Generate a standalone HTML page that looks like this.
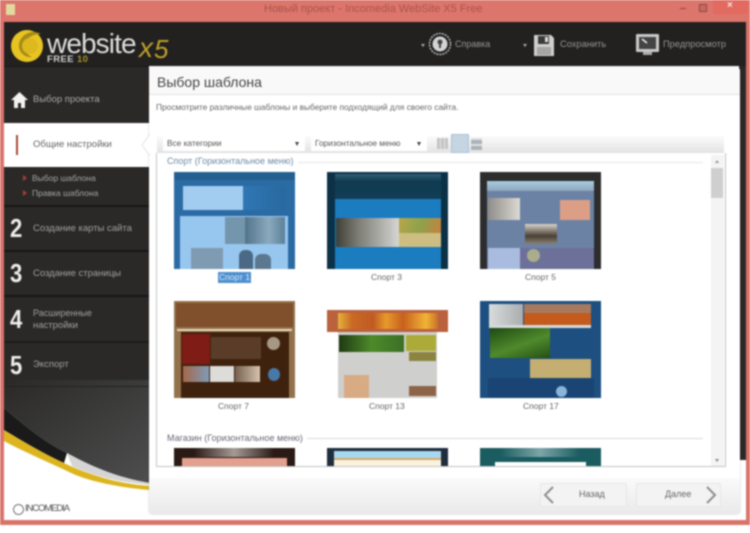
<!DOCTYPE html>
<html><head><meta charset="utf-8">
<style>
html,body{margin:0;padding:0;background:#fff;}
#r{position:relative;width:750px;height:533px;overflow:hidden;background:#fff;font-family:"Liberation Sans",sans-serif;filter:blur(.7px);}
#r div{position:absolute;}
.t{white-space:nowrap;line-height:1;}
.th{overflow:hidden;}
</style></head><body><div id="r">
<!-- frame -->
<div style="left:0;top:0;width:750px;height:525px;background:#d9736a"></div>
<div style="left:0;top:0;width:750px;height:22px;background:#dc756b"></div>
<div style="left:6px;top:4px;width:9px;height:11px;background:#e3d9a0"></div>
<div class="t" style="left:264px;top:4px;font-size:11px;color:#a8554c">Новый проект - Incomedia WebSite X5 Free</div>
<div style="left:680px;top:8px;width:6px;height:1px;background:#8a4a44"></div>
<div style="left:699px;top:4px;width:6px;height:6px;border:1px solid #8a4a44;background:#c9685f"></div>
<div style="left:713px;top:0;width:35px;height:14px;background:#e26a60;border-radius:0 0 2px 2px"></div>
<div class="t" style="left:727px;top:1px;font-size:10px;color:#f6e6e2;font-weight:bold">×</div>

<!-- app -->
<div style="left:4px;top:22px;width:742px;height:498px;background:#fff"></div>
<div style="left:4px;top:22px;width:742px;height:44px;background:#222120"></div>
<div style="left:739px;top:66px;width:7px;height:394px;background:#2a2827"></div>
<!-- sidebar -->
<div style="left:4px;top:66px;width:145px;height:322px;background:#2a2928"></div>
<svg style="position:absolute;left:4px;top:380px" width="146" height="115" viewBox="0 0 146 115">
<defs><linearGradient id="g" x1="0" y1="0" x2="1" y2="1"><stop offset="0" stop-color="#2a2928"/><stop offset="1" stop-color="#4e4e4e"/></linearGradient></defs>
<path d="M0 0H146V103C110 97 85 85 63 73C40 62 20 45 0 28Z" fill="url(#g)"/>
<path d="M0 28C20 45 40 62 63 73L60 83C40 74 20 62 0 50Z" fill="#1b1a1a"/>
<path d="M63 73C85 85 110 97 146 103V105C110 102 85 94 68 86Z" fill="#d5d5d5"/>
<path d="M0 50C20 62 40 74 60 83C85 95 115 104 146 106V110C110 107 80 100 63 91C40 80 20 72 0 61Z" fill="#dcb51e"/>
</svg>
<div style="left:4px;top:66px;width:145px;height:1px;background:#1a1918"></div>
<div style="left:4px;top:123px;width:145px;height:44px;background:#fff"></div>
<div style="left:16px;top:135px;width:2px;height:20px;background:#a8483a"></div>
<div style="left:4px;top:205px;width:145px;height:2px;background:#181716"></div>
<div style="left:4px;top:250px;width:145px;height:2px;background:#181716"></div>
<div style="left:4px;top:295px;width:145px;height:2px;background:#181716"></div>
<div style="left:4px;top:341px;width:145px;height:2px;background:#1e1d1c"></div>
<div style="left:4px;top:386px;width:145px;height:1px;background:#232221"></div>

<!-- logo -->
<svg style="position:absolute;left:8px;top:27px" width="38" height="38" viewBox="0 0 38 38"><circle cx="19" cy="19" r="16" fill="#e8c422"/><path d="M33 7C24 2 13 7 11 17C10 25 17 31 24 30C17 27 15 20 18 14C21 9 27 7 33 7Z" fill="#a78a18"/><circle cx="22" cy="19" r="8" fill="#dcb91f"/></svg>
<div class="t" style="left:47px;top:30px;font-size:28px;color:#dcdcdc;letter-spacing:-.9px">website</div>
<div class="t" style="left:139px;top:34px;font-size:28px;color:#bd9f2a;font-style:italic">x</div>
<div class="t" style="left:154px;top:36px;font-size:26px;color:#bd9f2a;font-style:italic">5</div>
<div class="t" style="left:47px;top:55px;font-size:9.5px;font-weight:bold;color:#d0d0d0;letter-spacing:.4px">FREE <span style="color:#a8922c">10</span></div>

<!-- sidebar items -->
<svg style="position:absolute;left:11px;top:91px" width="17" height="18" viewBox="0 0 17 18"><path d="M8.5 1L0 9H3V17H7V12H10V17H14V9H17Z" fill="#f2f2f2"/></svg>
<div class="t" style="left:33px;top:95px;font-size:9.5px;color:#a8a8a8">Выбор проекта</div>
<div class="t" style="left:33px;top:140px;font-size:9.5px;color:#666">Общие настройки</div>
<div style="left:23px;top:175px;width:0;height:0;border-left:4px solid #a8402e;border-top:3px solid transparent;border-bottom:3px solid transparent"></div>
<div style="left:23px;top:190px;width:0;height:0;border-left:4px solid #a8402e;border-top:3px solid transparent;border-bottom:3px solid transparent"></div>
<div class="t" style="left:32px;top:174px;font-size:8.5px;color:#a5a5a5">Выбор шаблона</div>
<div class="t" style="left:32px;top:189px;font-size:8.5px;color:#a5a5a5">Правка шаблона</div>
<div class="t" style="left:10px;top:215px;font-size:26px;font-weight:bold;color:#ececec;transform:scaleX(.85);transform-origin:left">2</div>
<div class="t" style="left:33px;top:224px;font-size:9.5px;color:#a0a0a0">Создание карты сайта</div>
<div class="t" style="left:10px;top:260px;font-size:26px;font-weight:bold;color:#ececec;transform:scaleX(.85);transform-origin:left">3</div>
<div class="t" style="left:33px;top:269px;font-size:9.5px;color:#a0a0a0">Создание страницы</div>
<div class="t" style="left:10px;top:306px;font-size:26px;font-weight:bold;color:#ececec;transform:scaleX(.85);transform-origin:left">4</div>
<div class="t" style="left:33px;top:309px;font-size:9px;color:#a0a0a0">Расширенные</div>
<div class="t" style="left:33px;top:321px;font-size:9.5px;color:#a0a0a0">настройки</div>
<div class="t" style="left:10px;top:352px;font-size:26px;font-weight:bold;color:#ececec;transform:scaleX(.85);transform-origin:left">5</div>
<div class="t" style="left:33px;top:360px;font-size:9.5px;color:#a0a0a0">Экспорт</div>
<div style="left:13px;top:504px;width:9px;height:9px;border:1px solid #777;border-radius:50%"></div>
<div class="t" style="left:25px;top:504px;font-size:9.5px;color:#555;letter-spacing:-1.1px">INCOMEDIA</div>

<!-- toolbar -->
<div style="left:421px;top:44px;width:0;height:0;border-left:2px solid transparent;border-right:2px solid transparent;border-top:3px solid #aaa"></div>
<svg style="position:absolute;left:428px;top:31px" width="24" height="26" viewBox="0 0 24 26"><circle cx="12" cy="13" r="10.5" fill="#222" stroke="#b8b8b8" stroke-width="1.5" stroke-dasharray="2 1"/><circle cx="12" cy="13" r="7.5" fill="#d4d4d4"/><circle cx="12" cy="11" r="2.5" fill="#444"/><rect x="11" y="13" width="2" height="4" fill="#444"/></svg>
<div class="t" style="left:455px;top:40px;font-size:9px;color:#959595">Справка</div>
<div style="left:523px;top:44px;width:0;height:0;border-left:2px solid transparent;border-right:2px solid transparent;border-top:3px solid #aaa"></div>
<svg style="position:absolute;left:533px;top:34px" width="22" height="23" viewBox="0 0 22 23"><path d="M1 1H18L21 4V22H1Z" fill="#cfcfcf"/><rect x="5" y="2" width="11" height="8" fill="#3a3a3a"/><rect x="12" y="3" width="3" height="5" fill="#ddd"/><rect x="4" y="13" width="14" height="8" fill="#a5a5a5"/></svg>
<div class="t" style="left:560px;top:40px;font-size:9.3px;color:#959595">Сохранить</div>
<svg style="position:absolute;left:635px;top:33px" width="25" height="24" viewBox="0 0 25 24"><rect x="1" y="1" width="23" height="18" rx="1" fill="#c8c8c8"/><rect x="4" y="4" width="17" height="12" fill="#444"/><rect x="8" y="19" width="9" height="3" fill="#aaa"/><path d="M7 6L12 10" stroke="#eee" stroke-width="1.5"/></svg>
<div class="t" style="left:663px;top:40px;font-size:9.3px;color:#959595">Предпросмотр</div>

<!-- panel -->
<div style="left:149px;top:67px;width:591px;height:447px;background:#fff;border-radius:4px 4px 3px 3px;box-shadow:0 0 2px rgba(0,0,0,.2)"></div>
<div style="left:149px;top:67px;width:591px;height:27px;background:#f9f9f9;border-radius:4px 4px 0 0;border-bottom:1px solid #e2e2e2"></div>
<div class="t" style="left:157px;top:75px;font-size:14px;color:#444">Выбор шаблона</div>
<div class="t" style="left:156px;top:103px;font-size:8.4px;color:#666">Просмотрите различные шаблоны и выберите подходящий для своего сайта.</div>
<svg style="position:absolute;left:141px;top:134px" width="9" height="22" viewBox="0 0 9 22"><path d="M9 0L1 11L9 22" fill="#fff" stroke="#e4e4e4"/></svg>

<!-- filter bar -->
<div style="left:157px;top:136px;width:567px;height:17px;background:linear-gradient(#fbfbfb,#e2e2e2);border-bottom:1px solid #aaa"></div>
<div style="left:163px;top:136px;width:142px;height:15px;background:#fff"></div>
<div class="t" style="left:167px;top:139px;font-size:8.3px;color:#555">Все категории</div>
<div style="left:295px;top:142px;width:0;height:0;border-left:2.5px solid transparent;border-right:2.5px solid transparent;border-top:4px solid #444"></div>
<div style="left:311px;top:136px;width:116px;height:15px;background:#fff"></div>
<div class="t" style="left:315px;top:139px;font-size:8.3px;color:#555">Горизонтальное меню</div>
<div style="left:417px;top:142px;width:0;height:0;border-left:2.5px solid transparent;border-right:2.5px solid transparent;border-top:4px solid #444"></div>
<div style="left:437px;top:138px;width:11px;height:11px;background:repeating-linear-gradient(90deg,#c4c4c4 0 3px,#e6e6e6 3px 4px)"></div>
<div style="left:451px;top:134px;width:16px;height:17px;background:#c5d5e2;border:1px solid #a8c2d6"></div>
<div style="left:471px;top:138px;width:11px;height:12px;background:repeating-linear-gradient(0deg,#aab4b8 0 4px,#e0e0e0 4px 6px)"></div>

<!-- list -->
<div style="left:156px;top:153px;width:568px;height:313px;background:#fff;border:1px solid #c4c4c4;border-top:none"></div>
<div style="left:711px;top:155px;width:13px;height:311px;background:#f4f4f4"></div>
<div style="left:711px;top:168px;width:12px;height:30px;background:#cfcfcf"></div>
<div style="left:715px;top:160px;width:0;height:0;border-left:2.5px solid transparent;border-right:2.5px solid transparent;border-bottom:3px solid #999"></div>
<div style="left:715px;top:459px;width:0;height:0;border-left:2.5px solid transparent;border-right:2.5px solid transparent;border-top:3px solid #888"></div>
<div class="t" style="left:167px;top:157px;font-size:9px;color:#6a89a6">Спорт (Горизонтальное меню)</div>
<div style="left:298px;top:162px;width:405px;height:1px;background:#e6e6e6"></div>
<div class="t" style="left:167px;top:434px;font-size:9px;color:#667">Магазин (Горизонтальное меню)</div>
<div style="left:307px;top:438px;width:396px;height:1px;background:#dcdcdc"></div>

<!-- thumb 1 -->
<div class="th" style="left:174px;top:172px;width:121px;height:97px;background:#2b6ba4">
<div style="left:0;top:0;width:121px;height:8px;background:#23608f"></div>
<div style="left:9px;top:14px;width:60px;height:24px;background:#a2cdf0"></div>
<div style="left:69px;top:14px;width:42px;height:24px;background:linear-gradient(90deg,#2f77b4,#28699f)"></div>
<div style="left:6px;top:44px;width:108px;height:53px;background:#97c6ee"></div>
<div style="left:51px;top:45px;width:20px;height:27px;background:#7496ac"></div>
<div style="left:71px;top:45px;width:40px;height:27px;background:linear-gradient(90deg,#53738c,#8aa9bd 60%,#5c7f98)"></div>
<div style="left:17px;top:76px;width:32px;height:21px;background:#7f9bb2"></div>
<div style="left:65px;top:78px;width:14px;height:19px;background:#4a6985;border-radius:6px 6px 0 0"></div>
<div style="left:81px;top:82px;width:16px;height:15px;background:#5b7890;border-radius:6px 6px 0 0"></div>
</div>
<div style="left:218px;top:272px;width:33px;height:11px;background:#4d90d0"></div>
<div class="t" style="left:219px;top:273px;font-size:8.5px;color:#dce9f5">Спорт 1</div>
<!-- thumb 3 -->
<div class="th" style="left:327px;top:172px;width:121px;height:97px;background:#0c3146">
<div style="left:8px;top:2px;width:106px;height:25px;background:linear-gradient(#2f5f72,#0f3a50 30%,#113e55)"></div>
<div style="left:8px;top:27px;width:106px;height:70px;background:#1b7cc0"></div>
<div style="left:9px;top:46px;width:63px;height:29px;background:linear-gradient(90deg,#3f3f35,#7c7c74 35%,#d5d5d2)"></div>
<div style="left:72px;top:46px;width:42px;height:15px;background:linear-gradient(110deg,#b8a54a,#8ea24a,#c8803f)"></div>
<div style="left:72px;top:61px;width:42px;height:14px;background:#cdbd82"></div>
</div>
<div class="t" style="left:371px;top:273px;font-size:8.5px;color:#666">Спорт 3</div>
<!-- thumb 5 -->
<div class="th" style="left:480px;top:172px;width:121px;height:97px;background:#2e2d2d">
<div style="left:7px;top:9px;width:107px;height:88px;background:#6b82a5"></div>
<div style="left:7px;top:9px;width:107px;height:10px;background:linear-gradient(#a9cde0,#8ca5bd)"></div>
<div style="left:8px;top:26px;width:32px;height:22px;background:linear-gradient(90deg,#8f8d88,#dcd9d2)"></div>
<div style="left:80px;top:28px;width:30px;height:20px;background:#dc9f86"></div>
<div style="left:45px;top:52px;width:32px;height:20px;background:linear-gradient(#d8d2c8,#4a3f34 60%,#8a8074)"></div>
<div style="left:8px;top:76px;width:32px;height:21px;background:#a9bce0"></div>
<div style="left:40px;top:76px;width:74px;height:21px;background:#6d7099"></div>
<div style="left:47px;top:77px;width:13px;height:13px;border-radius:50%;background:#a9ad8c"></div>
</div>
<div class="t" style="left:525px;top:273px;font-size:8.5px;color:#666">Спорт 5</div>
<!-- thumb 7 -->
<div class="th" style="left:174px;top:301px;width:121px;height:97px;background:#93714a">
<div style="left:2px;top:2px;width:117px;height:24px;background:#80502c"></div>
<div style="left:3px;top:28px;width:115px;height:2px;background:#e6d8ba"></div>
<div style="left:7px;top:31px;width:108px;height:66px;background:#3f220e"></div>
<div style="left:8px;top:33px;width:28px;height:30px;background:#7e1c15"></div>
<div style="left:37px;top:36px;width:50px;height:22px;background:#5a3d28"></div>
<div style="left:93px;top:36px;width:13px;height:13px;background:#a59885;border-radius:50%"></div>
<div style="left:9px;top:65px;width:26px;height:16px;background:linear-gradient(90deg,#a5684a,#7f9ab8)"></div>
<div style="left:36px;top:65px;width:24px;height:16px;background:#dcdcd9"></div>
<div style="left:61px;top:65px;width:25px;height:16px;background:linear-gradient(90deg,#75604e,#d5c4ae)"></div>
<div style="left:94px;top:67px;width:12px;height:13px;background:#4878a8;border-radius:50%"></div>
</div>
<div class="t" style="left:218px;top:402px;font-size:8.5px;color:#666">Спорт 7</div>
<!-- thumb 13 -->
<div class="th" style="left:327px;top:310px;width:121px;height:88px;background:#fff">
<div style="left:0;top:0;width:121px;height:22px;background:#b9623d"></div>
<div style="left:11px;top:3px;width:100px;height:16px;background:linear-gradient(90deg,#e6b23c,#c96a24 14%,#c05a22 35%,#e69a2c 48%,#c8601f 65%,#f0b434 88%,#c8702a)"></div>
<div style="left:11px;top:22px;width:99px;height:66px;background:#cfcfcd"></div>
<div style="left:12px;top:25px;width:65px;height:17px;background:linear-gradient(90deg,#1f3a14,#4c8a2a 50%,#3c6f25)"></div>
<div style="left:79px;top:25px;width:30px;height:16px;background:#acab3a"></div>
<div style="left:82px;top:42px;width:27px;height:9px;background:#8b8440"></div>
<div style="left:17px;top:65px;width:25px;height:23px;background:#d8ab84"></div>
<div style="left:82px;top:76px;width:27px;height:10px;background:#8e6448"></div>
</div>
<div class="t" style="left:369px;top:402px;font-size:8.5px;color:#666">Спорт 13</div>
<!-- thumb 17 -->
<div class="th" style="left:480px;top:301px;width:121px;height:97px;background:#1d4f80">
<div style="left:9px;top:3px;width:34px;height:21px;background:linear-gradient(90deg,#d8dcdc,#a9adad)"></div>
<div style="left:44px;top:3px;width:67px;height:9px;background:#a77a5f"></div>
<div style="left:44px;top:12px;width:67px;height:12px;background:#c45a1c"></div>
<div style="left:9px;top:24px;width:102px;height:3px;background:#d5d9d9"></div>
<div style="left:10px;top:27px;width:60px;height:30px;background:linear-gradient(160deg,#1f4a12,#4f8a2c 55%,#244f14)"></div>
<div style="left:50px;top:58px;width:61px;height:19px;background:#c4ae72"></div>
<div style="left:8px;top:77px;width:106px;height:20px;background:#194473"></div>
<div style="left:76px;top:85px;width:11px;height:11px;background:#8ab4da;border-radius:50%"></div>
</div>
<div class="t" style="left:523px;top:402px;font-size:8.5px;color:#666">Спорт 17</div>
<!-- row 3 -->
<div class="th" style="left:174px;top:448px;width:121px;height:18px;background:#2a1a16">
<div style="left:20px;top:0;width:80px;height:9px;background:linear-gradient(90deg,#2a1a16,#a59a94 50%,#2a1a16)"></div>
<div style="left:8px;top:10px;width:105px;height:8px;background:#e3a08e"></div>
</div>
<div class="th" style="left:327px;top:448px;width:121px;height:18px;background:#1f2d3d">
<div style="left:7px;top:3px;width:107px;height:15px;background:#fbf2df"></div>
<div style="left:7px;top:3px;width:107px;height:7px;background:#a8d8f0"></div>
<div style="left:7px;top:10px;width:107px;height:2px;background:#d8a868"></div>
</div>
<div class="th" style="left:480px;top:448px;width:121px;height:18px;background:#1a5c60">
<div style="left:20px;top:0;width:80px;height:9px;background:linear-gradient(90deg,#1a5c60,#7ca6a8 50%,#1a5c60)"></div>
<div style="left:15px;top:14px;width:91px;height:4px;background:#fff"></div>
</div>

<!-- footer -->
<div style="left:149px;top:478px;width:591px;height:36px;background:linear-gradient(#fafafa,#e9e9e9);border-radius:0 0 3px 3px"></div>
<div style="left:540px;top:483px;width:85px;height:22px;background:#f3f3f3;border:1px solid #e6e6e6;border-radius:2px"></div>
<div style="left:636px;top:483px;width:83px;height:22px;background:#f3f3f3;border:1px solid #e6e6e6;border-radius:2px"></div>
<svg style="position:absolute;left:543px;top:486px" width="12" height="18" viewBox="0 0 12 18"><path d="M10 1L2 9L10 17" fill="none" stroke="#8f8f8f" stroke-width="2"/></svg>
<svg style="position:absolute;left:705px;top:486px" width="12" height="18" viewBox="0 0 12 18"><path d="M2 1L10 9L2 17" fill="none" stroke="#8f8f8f" stroke-width="2"/></svg>
<div class="t" style="left:579px;top:490px;font-size:9px;color:#666">Назад</div>
<div class="t" style="left:665px;top:490px;font-size:9px;color:#666">Далее</div>
</div></body></html>
